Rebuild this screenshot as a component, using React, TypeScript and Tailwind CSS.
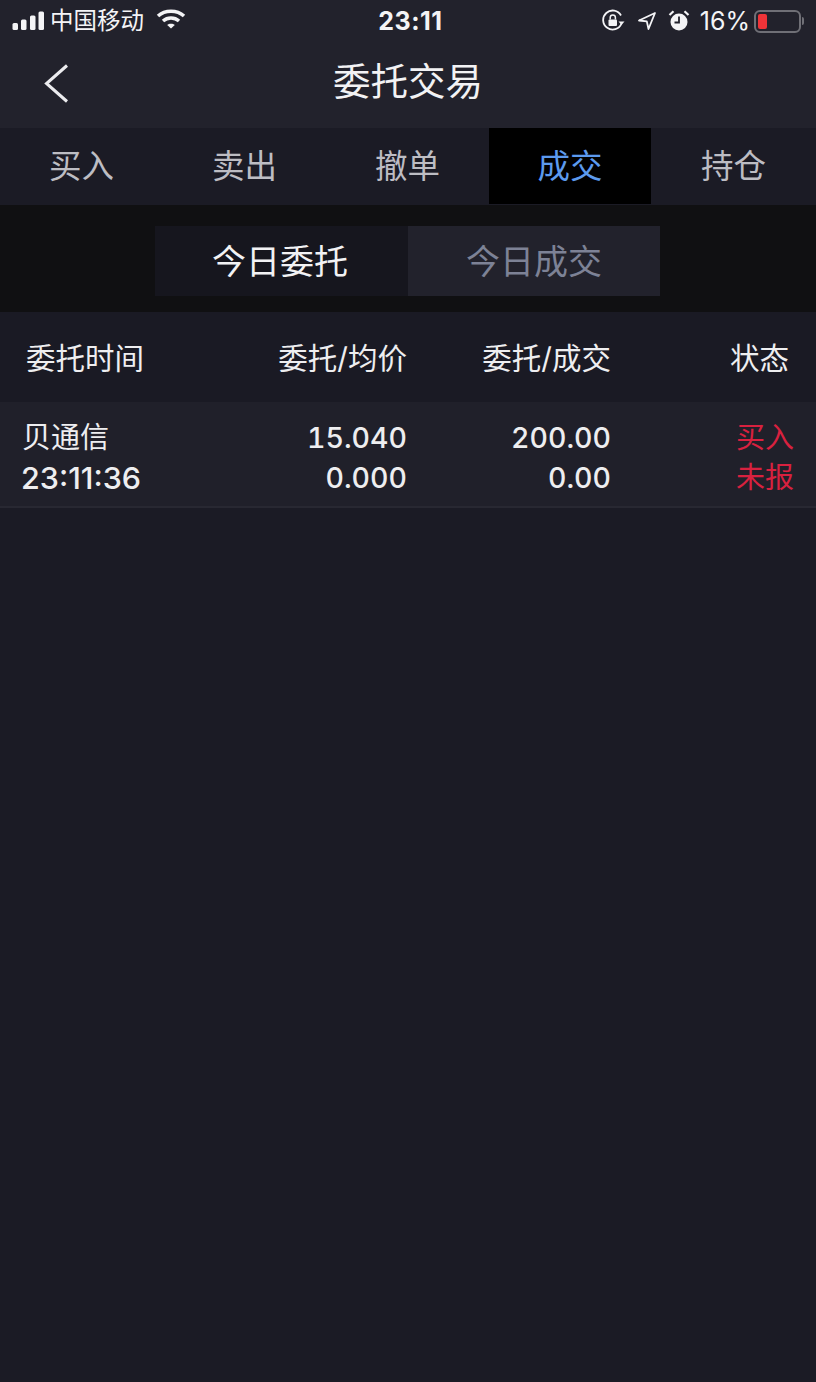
import React from "react";

const cjk = "font-['Inter','Noto_Sans_CJK_SC',sans-serif]";

const SignalIcon = () => (
  <svg width="33" height="20" viewBox="0 0 33 20" fill="#f4f4f6">
    <rect x="0.5" y="12" width="5.5" height="7" rx="1.5" />
    <rect x="9" y="8.5" width="5.5" height="10.5" rx="1.5" />
    <rect x="18" y="4.5" width="5.5" height="14.5" rx="1.5" />
    <rect x="26.5" y="0.5" width="5.5" height="18.5" rx="1.5" />
  </svg>
);

const WifiIcon = () => (
  <svg width="30" height="22" viewBox="0 0 30 22" fill="none" stroke="#f4f4f6" strokeWidth="3.5">
    <path d="M2 8 C9 1.5 21 1.5 28 8" />
    <path d="M7 13 C11.5 9 18.5 9 23 13" />
    <path d="M15 20.5 L11.2 17 C13 15.4 17 15.4 18.8 17 Z" fill="#f4f4f6" stroke="none" />
  </svg>
);

const RotationLockIcon = () => (
  <svg width="24" height="24" viewBox="0 0 24 24" fill="none">
    <path d="M20.5 14.5 A9.5 9.5 0 1 1 20 6.5" stroke="#f4f4f6" strokeWidth="1.8" />
    <path d="M17.5 12.5 L23.5 12.5 L20.5 16 Z" fill="#f4f4f6" />
    <rect x="7.5" y="10.5" width="8.5" height="6.5" rx="1" fill="#f4f4f6" />
    <path d="M9.2 10.5 V8.6 a2.6 2.6 0 0 1 5.2 0 V10.5" stroke="#f4f4f6" strokeWidth="1.5" />
  </svg>
);

const LocationIcon = () => (
  <svg width="20" height="20" viewBox="0 0 20 20" fill="none">
    <path d="M18 2 L2 9.5 L9.8 10.4 L11.5 18 Z" stroke="#f4f4f6" strokeWidth="1.8" strokeLinejoin="round" />
  </svg>
);

const AlarmIcon = () => (
  <svg width="22" height="24" viewBox="0 0 22 24" fill="none">
    <circle cx="11" cy="13" r="8.5" fill="#f4f4f6" />
    <path d="M11 7.5 V13.5 H6.5" stroke="#22222c" strokeWidth="1.8" />
    <path d="M1.5 6 L5.5 2.2 M20.5 6 L16.5 2.2" stroke="#f4f4f6" strokeWidth="2.2" />
  </svg>
);

const BackIcon = () => (
  <svg width="26" height="40" viewBox="0 0 26 40" fill="none" stroke="#ececef" strokeWidth="3">
    <path d="M23 1.5 L2.5 19.5 L23 37.5" />
  </svg>
);

const BatteryIcon = () => (
  <div className="flex items-center">
    <div className="w-[47px] h-[23px] rounded-[6px] border-2 border-[#6f6f76] p-[2px]">
      <div className="w-[9px] h-full rounded-[2px] bg-[#ef3338]" />
    </div>
    <div className="ml-[1px] w-[2px] h-[8px] rounded-r-sm bg-[#6f6f76]" />
  </div>
);

const StatusBar = () => (
  <div className="h-[42px] flex items-center text-[#f4f4f6]">
    <div className="flex-1 flex items-center pl-[12px]">
      <SignalIcon />
      <span className="ml-[5px] text-[23.5px] leading-none">中国移动</span>
      <span className="ml-[12px] -mt-[4px]">
        <WifiIcon />
      </span>
    </div>
    <span className="ml-[5px] text-[25px] font-bold leading-none tracking-[0.5px]">23:11</span>
    <div className="flex-1 flex items-center justify-end pr-[12px]">
      <RotationLockIcon />
      <span className="ml-[12px]">
        <LocationIcon />
      </span>
      <span className="ml-[11px]">
        <AlarmIcon />
      </span>
      <span className="ml-[10px] text-[25px] leading-none">16%</span>
      <span className="ml-[4px]">
        <BatteryIcon />
      </span>
    </div>
  </div>
);

const tabs = ["买入", "卖出", "撤单", "成交", "持仓"];

const Tabs = () => (
  <div className="h-[77px] grid grid-cols-[163px_163px_163px_162px_165px] bg-[#1b1b25]">
    {tabs.map((tab) => (
      <div
        key={tab}
        className={
          tab === "成交"
            ? "h-[76px] pt-[2px] flex items-center justify-center text-[32.5px] text-[#5c9aee] bg-black"
            : "h-[76px] pt-[2px] flex items-center justify-center text-[32.5px] text-[#bdbdc3]"
        }
      >
        {tab}
      </div>
    ))}
  </div>
);

const Segments = () => (
  <div className="h-[107px] bg-[#101012] flex pl-[155px] pt-[21px] pb-[16px]">
    <div className="w-[505px] flex">
      <div className="w-[253px] pr-[3px] bg-[#16161e] flex items-center justify-center text-[34px] text-[#f2f2f4]">
        今日委托
      </div>
      <div className="flex-1 bg-[#22222c] flex items-center justify-center text-[34px] text-[#7d8296]">
        今日成交
      </div>
    </div>
  </div>
);

const TableHeader = () => (
  <div className="h-[90px] pt-[2px] bg-[#1a1a24] flex items-center pl-[26px] pr-[27px] text-[29.5px] text-[#eeeef0]">
    <div className="w-[181px]">委托时间</div>
    <div className="w-[200px] text-right">委托/均价</div>
    <div className="w-[204px] text-right">委托/成交</div>
    <div className="flex-1 text-right">状态</div>
  </div>
);

const OrderRow = () => (
  <div className="h-[106px] pt-[7px] bg-[#20202a] border-b-2 border-[#282832] flex items-center pl-[22px] pr-[22px] text-[29px] leading-[40px] text-[#eeeef0]">
    <div className="w-[185px]">
      <div>贝通信</div>
      <div className="-ml-[1px] text-[30.5px] font-medium">23:11:36</div>
    </div>
    <div className="w-[200px] text-right text-[28.5px] font-medium tabular-nums">
      <div>15.040</div>
      <div>0.000</div>
    </div>
    <div className="w-[204px] text-right text-[28.5px] font-medium tabular-nums">
      <div>200.00</div>
      <div>0.00</div>
    </div>
    <div className="flex-1 text-right text-[#d8213f]">
      <div>买入</div>
      <div>未报</div>
    </div>
  </div>
);

export default function App() {
  return (
    <div className={`w-[816px] h-[1382px] bg-[#1b1b25] overflow-hidden ${cjk}`}>
      <div className="h-[128px] bg-[#22222c]">
        <StatusBar />
        <div className="relative h-[86px] flex items-center justify-center">
          <span className="absolute left-[44px] top-[22px]">
            <BackIcon />
          </span>
          <span className="text-[37.5px] text-[#f2f2f4] leading-none -mt-[6px]">委托交易</span>
        </div>
      </div>
      <Tabs />
      <Segments />
      <TableHeader />
      <OrderRow />
    </div>
  );
}
